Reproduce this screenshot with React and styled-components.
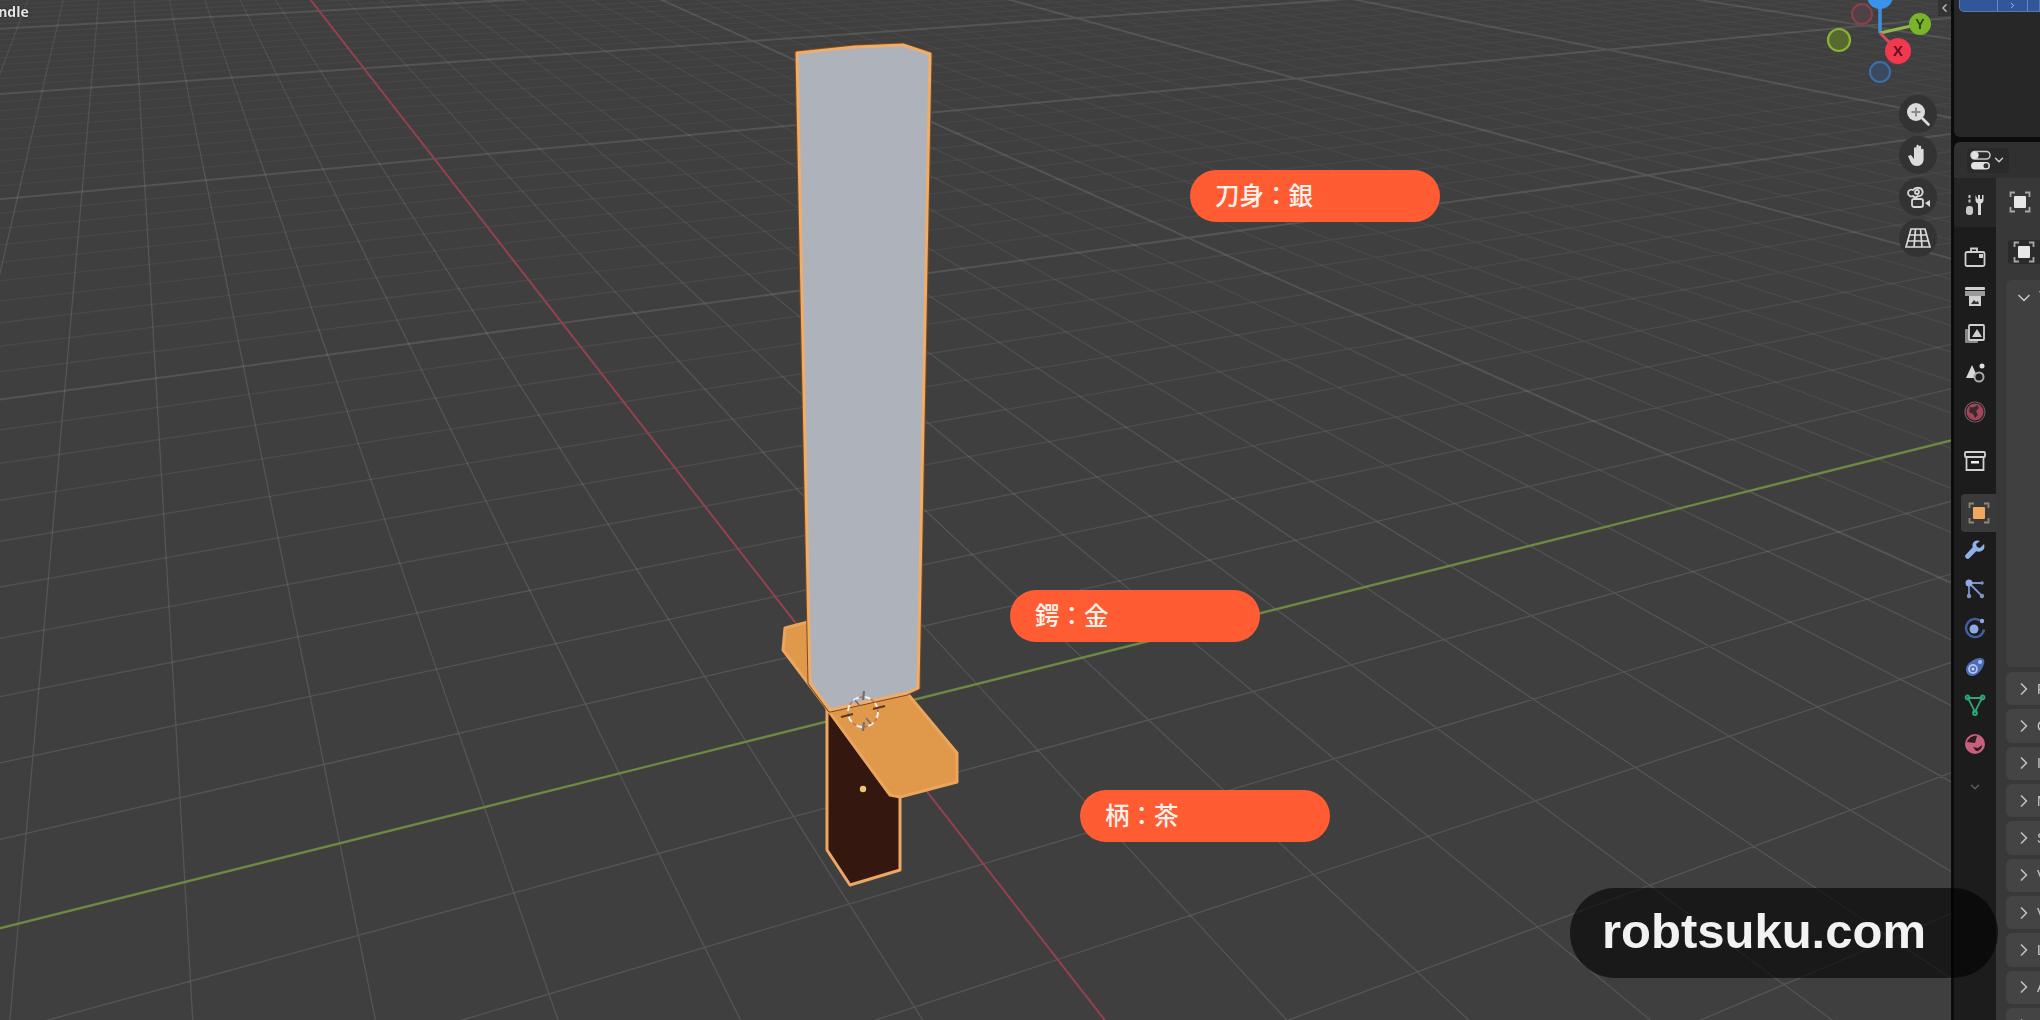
import React from "react";
import styled, { createGlobalStyle } from "styled-components";
import { ChevronDown, ChevronLeft, ChevronRight } from "lucide-react";

const GlobalStyle = createGlobalStyle`
  html, body { margin: 0; padding: 0; background: #3f3f3f; }
  body { font-family: "Liberation Sans", "Noto Sans CJK JP", sans-serif; }
`;

/* ---------- perspective ground grid (a homography fitted to the picture) ---------- */
const V1 = [4645, -233];
const V2 = [120, -245];
const O = [865, 712];
const A = 0.0305;
const B = 0.0685;

const project = (u, v) => {
  const p = A * u;
  const q = B * v;
  const w = p + q + 1;
  return [(p * V1[0] + q * V2[0] + O[0]) / w, (p * V1[1] + q * V2[1] + O[1]) / w];
};

const UMIN = -10, UMAX = 60, VMIN = -7, VMAX = 58;
const f = (n) => n.toFixed(1);

const buildGrid = () => {
  const buckets = [{}, {}, {}, {}, {}, {}, {}, {}];
  const add = (a, b, next) => {
    const dx = b[0] - a[0], dy = b[1] - a[1];
    const len = Math.hypot(dx, dy) || 1;
    const s = Math.abs((next[0] - a[0]) * dy - (next[1] - a[1]) * dx) / len;
    const level = Math.max(0, Math.min(7, Math.floor((s - 5) / 8)));
    buckets[level].d = (buckets[level].d || "") + `M${f(a[0])} ${f(a[1])}L${f(b[0])} ${f(b[1])}`;
  };
  for (let u = UMIN; u <= UMAX; u++) {
    if (u % 10 === 0) continue;
    for (let v = VMIN; v < VMAX; v += 2) add(project(u, v), project(u, v + 2), project(u + 1, v));
  }
  for (let v = VMIN; v <= VMAX; v++) {
    if (v % 10 === 0) continue;
    for (let u = UMIN; u < UMAX; u += 2) add(project(u, v), project(u + 2, v), project(u, v + 1));
  }
  let major = "";
  for (let u = UMIN; u <= UMAX; u += 10) {
    if (u === 0) continue;
    const a = project(u, VMIN), b = project(u, VMAX);
    major += `M${f(a[0])} ${f(a[1])}L${f(b[0])} ${f(b[1])}`;
  }
  for (let v = 10; v <= VMAX; v += 10) {
    const a = project(UMIN, v), b = project(UMAX, v);
    major += `M${f(a[0])} ${f(a[1])}L${f(b[0])} ${f(b[1])}`;
  }
  return { buckets, major };
};
const GRID = buildGrid();
const RED_A = project(0, 60), RED_B = project(0, -7);
const GREEN_A = project(-10, 0), GREEN_B = project(60, 0);

/* ---------- page ---------- */
const Page = styled.div`
  display: flex;
  width: 2040px;
  height: 1020px;
  overflow: hidden;
  background: #000;
`;
const Viewport = styled.main`
  position: relative;
  flex: 0 0 1951px;
  height: 1020px;
  overflow: hidden;
  background: #3f3f3f;
`;
const SceneCanvas = styled.svg`
  display: block;
  width: 2040px;
  height: 1020px;
  filter: blur(0.7px);
`;
const ObjectLabel = styled.span`
  position: absolute;
  top: 2px;
  left: -21px;
  font: 700 14px "Open Sans", sans-serif;
  color: #e4e4e4;
  text-shadow: 0 0 2px #111;
  filter: blur(0.5px);
`;
const Callout = styled.div`
  position: absolute;
  left: ${(p) => p.$x}px;
  top: ${(p) => p.$y}px;
  display: flex;
  align-items: center;
  box-sizing: border-box;
  width: 250px;
  height: 52px;
  padding: 0 0 3px 25px;
  border-radius: 26px;
  background: #ff5c33;
  color: #fff3ec;
  font: 500 24.5px "Noto Sans CJK JP", sans-serif;
`;
const CollapseTab = styled.div`
  position: absolute;
  top: 0;
  right: 0;
  display: flex;
  align-items: center;
  justify-content: center;
  width: 13px;
  height: 16px;
  background: #333;
  color: #bbb;
`;
const GizmoArt = styled.svg`
  position: absolute;
  top: 0;
  left: 1825px;
  width: 110px;
  height: 95px;
  filter: blur(0.5px);
`;
const NavStack = styled.div`
  position: absolute;
  top: 95px;
  left: 1899px;
  display: flex;
  flex-direction: column;
  gap: 3.4px;
  filter: blur(0.5px);
`;
const NavButton = styled.div`
  display: flex;
  align-items: center;
  justify-content: center;
  width: 38px;
  height: 38px;
  border-radius: 50%;
  background: #333333;
`;

/* ---------- right column ---------- */
const Sidebar = styled.aside`
  position: relative;
  display: flex;
  flex: 1;
  flex-direction: column;
  min-width: 0;
  padding-left: 3px;
  background: #0c0c0c;
  filter: blur(0.5px);
`;
const Outliner = styled.section`
  flex: 0 0 137px;
  padding-left: 5px;
  border-radius: 0 0 0 6px;
  background: #272727;
`;
const BlueBar = styled.div`
  display: flex;
  align-items: center;
  height: 11px;
  border: 1px solid #5a78ad;
  border-top: 0;
  border-radius: 0 0 0 5px;
  background: #31579b;
  color: #d8e2f5;
`;
const BlueCell = styled.div`
  display: flex;
  align-items: center;
  justify-content: center;
  box-sizing: border-box;
  width: ${(p) => p.$w}px;
  height: 100%;
  border-right: 1px solid #6a88bd;
`;
const Properties = styled.section`
  display: flex;
  flex: 1;
  flex-direction: column;
  min-height: 0;
  margin-top: 5px;
  border-radius: 6px 0 0 0;
  background: #303030;
  overflow: hidden;
`;
const PropsHeader = styled.header`
  display: flex;
  flex: 0 0 36px;
  align-items: center;
  padding-left: 13px;
`;
const EditorSwitch = styled.div`
  display: flex;
  align-items: center;
  gap: 1px;
  padding: 2px 3px;
  border-radius: 4px;
  background: #2a2a2a;
  color: #ccc;
`;
const PropsBody = styled.div`
  display: flex;
  flex: 1;
  min-height: 0;
`;
const TabStrip = styled.nav`
  display: flex;
  flex: 0 0 42px;
  flex-direction: column;
  background: #1c1c1c;
`;
const Tab = styled.div`
  display: flex;
  flex: 0 0 ${(p) => p.$h || 38.6}px;
  align-items: center;
  justify-content: center;
  margin-top: ${(p) => p.$gap || 0}px;
  padding-top: ${(p) => p.$nudge || 0}px;
  box-sizing: border-box;
  border-radius: 4px 0 0 4px;
  margin-left: ${(p) => (p.$active ? 7 : 0)}px;
  background: ${(p) => (p.$active ? "#3a3a3a" : p.$lit ? "#262626" : "transparent")};
`;
const Content = styled.div`
  display: flex;
  flex: 1;
  flex-direction: column;
  min-width: 0;
  padding: 12px 0 0 10px;
  background: #383838;
  overflow: hidden;
`;
const ContextIcon = styled.div`
  display: flex;
  flex: 0 0 24px;
  align-items: center;
  margin-top: ${(p) => p.$gap || 0}px;
  margin-left: ${(p) => p.$indent || 0}px;
  padding-left: ${(p) => (p.$boxed ? 5 : 0)}px;
  background: ${(p) => (p.$boxed ? "#2b2b2b" : "transparent")};
  border-radius: 4px 0 0 4px;
`;
const TransformPanel = styled.div`
  display: flex;
  flex: 0 0 387px;
  gap: 5px;
  padding: 8px 0 0 8px;
  margin: 16px 0 5px;
  border-radius: 6px 0 0 6px;
  background: #404040;
  color: #c8c8c8;
  font: 14px "Liberation Sans", sans-serif;
  white-space: nowrap;
  box-sizing: border-box;
`;
const PanelRow = styled.div`
  display: flex;
  flex: 0 0 33.33px;
  align-items: center;
  gap: 3px;
  margin-bottom: 4px;
  padding-left: 8px;
  border-radius: 6px 0 0 6px;
  background: #444;
  color: #c8c8c8;
  font: 14px "Liberation Sans", sans-serif;
  white-space: nowrap;
  overflow: hidden;
`;

/* ---------- watermark ---------- */
const Watermark = styled.div`
  position: absolute;
  left: 1570px;
  top: 888px;
  display: flex;
  align-items: center;
  box-sizing: border-box;
  width: 428px;
  height: 90px;
  padding: 0 0 4px 32px;
  border-radius: 45px;
  background: rgba(0, 0, 0, 0.6);
  color: #f2f2f2;
  font: 700 49px "Liberation Sans", sans-serif;
`;

/* ---------- drawings ---------- */
const Cursor3D = () => (
  <g>
    <circle cx="863" cy="712" r="15" fill="none" stroke="#f4f0ea" strokeWidth="2" strokeDasharray="7 5" />
    <circle cx="863" cy="712" r="15" fill="none" stroke="#c8714f" strokeWidth="1.6" strokeDasharray="4 8" strokeDashoffset="6" />
    <path d="M841 717l12-3M873 709l12-3" stroke="#5b3a22" strokeWidth="2.2" />
    <path d="M864 691l-1 9M864 722l-1 9" stroke="#6d7078" strokeWidth="2.2" />
    <path d="M855 700l5 6M866 718l5 6" stroke="#6d7078" strokeWidth="1.6" />
  </g>
);

const BLADE = "M797 53L855 47L903 45L930 54L918 688L907 693L830 710L810 683Z";

const Scene = () => (
  <SceneCanvas viewBox="0 0 2040 1020">
    {GRID.buckets.map((b, i) =>
      b.d ? (
        <path key={i} d={b.d} fill="none" stroke="#fff" strokeOpacity={0.035 + i * 0.012} strokeWidth="1.3" />
      ) : null
    )}
    <path d={GRID.major} fill="none" stroke="#fff" strokeOpacity="0.11" strokeWidth="2" />
    <line x1={RED_A[0]} y1={RED_A[1]} x2={RED_B[0]} y2={RED_B[1]} stroke="#96404f" strokeWidth="2" />
    <line x1={GREEN_A[0]} y1={GREEN_A[1]} x2={GREEN_B[0]} y2={GREEN_B[1]} stroke="#6c8a42" strokeWidth="2.2" />

    {/* handle */}
    <path d="M827 708L827 850L850 885L900 870L900 790Z" fill="#34170e" stroke="#eda765" strokeWidth="3" strokeLinejoin="round" />
    <circle cx="863" cy="789" r="3.2" fill="#f0c27a" />
    {/* guard */}
    <path d="M808 622L785 628L783 650L823 703L830 713L890 795L900 797L957 782L957 753L907 693Z" fill="#e0984b" stroke="#eca55c" strokeWidth="3" strokeLinejoin="round" />
    {/* blade */}
    <path d={BLADE} fill="#adb2bb" stroke="#7a4a22" strokeWidth="5" strokeLinejoin="round" />
    <path d={BLADE} fill="#adb2bb" stroke="#f0ad6a" strokeWidth="3" strokeLinejoin="round" />
    <Cursor3D />
  </SceneCanvas>
);

const Gizmo = () => (
  <GizmoArt viewBox="1825 0 110 95">
    <circle cx="1862" cy="14" r="10" fill="#4f4245" stroke="#8f3f4a" strokeWidth="2" />
    <circle cx="1839" cy="40" r="11" fill="#57692f" stroke="#8bb332" strokeWidth="2.2" />
    <circle cx="1880" cy="72" r="10" fill="#3b4a5e" stroke="#3d6eb0" strokeWidth="2" />
    <line x1="1880" y1="0" x2="1880" y2="33" stroke="#3f8ee0" strokeWidth="3.5" />
    <line x1="1880" y1="33" x2="1920" y2="24" stroke="#8fb84a" strokeWidth="3" />
    <line x1="1880" y1="33" x2="1898" y2="51" stroke="#d0505f" strokeWidth="3" />
    <circle cx="1880" cy="-4" r="13" fill="#3b92ea" />
    <circle cx="1920" cy="24" r="11" fill="#7ab428" />
    <circle cx="1898" cy="51" r="13" fill="#f0384f" />
    <text x="1920" y="29" textAnchor="middle" fontFamily="Liberation Sans" fontWeight="700" fontSize="14" fill="#2c4410">Y</text>
    <text x="1898" y="56" textAnchor="middle" fontFamily="Liberation Sans" fontWeight="700" fontSize="15" fill="#5c0f1c">X</text>
  </GizmoArt>
);

const ZoomIcon = () => (
  <svg width="26" height="26" viewBox="0 0 26 26">
    <circle cx="11" cy="11" r="9" fill="#dcdcdc" />
    <path d="M11 6.5v9M6.5 11h9" stroke="#8a8a8a" strokeWidth="2" />
    <path d="M17.5 17.5l6 6" stroke="#dcdcdc" strokeWidth="2.6" strokeLinecap="round" />
  </svg>
);
const HandIcon = () => (
  <svg width="26" height="26" viewBox="0 0 26 26">
    <path d="M3 14l3-1 3 4V6.5a1.2 1.2 0 0 1 2.4 0V13V4a1.2 1.2 0 0 1 2.4 0v9V5a1.2 1.2 0 0 1 2.4 0v8.500V8a1.2 1.2 0 0 1 2.4 0v9c0 4-2.500 7-6.500 7-3.500 0-5-1.500-6.500-4z" fill="#dcdcdc" />
  </svg>
);
const OrbitCamIcon = () => (
  <svg width="28" height="26" viewBox="0 0 28 26" fill="none" stroke="#d8d8d8" strokeWidth="1.8">
    <path d="M4 9c0-3 3-4 5-3 2-3 8-3 9 0 2 3-1 7-4 6-2 2-4 1-5 0-2 1-5 0-5-3z" />
    <circle cx="13" cy="8" r="2" />
    <rect x="8" y="15" width="11" height="8" rx="2" />
    <path d="M21 19l5-3v7z" fill="#d8d8d8" stroke="none" />
  </svg>
);
const PerspectiveIcon = () => (
  <svg width="26" height="22" viewBox="0 0 26 22" fill="none" stroke="#dcdcdc" strokeWidth="1.7">
    <path d="M6 2h14l5 18H1zM4.300 8h17.400M2.600 14h20.800M10.500 2L9 20M15.500 2L17 20" />
  </svg>
);

const I = { fill: "none", stroke: "#d0d0d0", strokeWidth: 1.8 };
const ToolIcon = () => (
  <svg width="22" height="24" viewBox="0 0 22 24">
    <path d="M5.5 2v9" stroke="#c8c8c8" strokeWidth="2" strokeDasharray="3 1.5" />
    <rect x="2" y="13" width="7" height="9" rx="3" fill="#c8c8c8" />
    <path d="M11.5 2v5c0 2 1 3 2.500 3.500V22h3V10.500c1.500-.5 2.500-1.500 2.500-3.500V2L18 2v4h-2V2h-2v4h-.5z" fill="#d8d8d8" />
  </svg>
);
const RenderIcon = () => (
  <svg width="22" height="22" viewBox="0 0 22 22" {...I}>
    <rect x="1.5" y="6" width="19" height="14" rx="1.5" />
    <path d="M7 6V2.500h6V6" />
    <rect x="15" y="8" width="4" height="4" fill="#d0d0d0" stroke="none" />
  </svg>
);
const OutputIcon = () => (
  <svg width="22" height="22" viewBox="0 0 22 22">
    <rect x="1" y="2" width="20" height="3" rx="1" fill="#d0d0d0" />
    <rect x="1" y="6" width="20" height="5" fill="#9a9a9a" />
    <rect x="5" y="11" width="12" height="10" fill="#d0d0d0" />
    <path d="M7 19l3-4 2 2 2-1 1 3z" fill="#333" />
  </svg>
);
const ViewLayerIcon = () => (
  <svg width="22" height="22" viewBox="0 0 22 22">
    <rect x="1" y="6" width="13" height="14" rx="1" fill="#888" />
    <rect x="5" y="2" width="15" height="15" rx="1" fill="#1c1c1c" stroke="#d0d0d0" strokeWidth="1.8" />
    <path d="M8 14l5-8 5 8z" fill="#d0d0d0" />
  </svg>
);
const SceneIcon = () => (
  <svg width="22" height="22" viewBox="0 0 22 22">
    <path d="M8 3l6 13H2z" fill="#d8d8d8" />
    <circle cx="15" cy="15" r="4.5" fill="#1c1c1c" stroke="#a8a8a8" strokeWidth="2" />
    <circle cx="18" cy="4" r="2.5" fill="#e0e0e0" />
  </svg>
);
const WorldIcon = () => (
  <svg width="22" height="22" viewBox="0 0 22 22">
    <circle cx="11" cy="11" r="8.5" fill="#a54358" />
    <path d="M6 6c3 1 5 0 7-2l2 3-3 3 2 4-3 3-2-4-4-2z" fill="#3a2a30" />
    <circle cx="11" cy="11" r="10" fill="none" stroke="#6b5a60" strokeWidth="1.2" />
  </svg>
);
const CollectionIcon = () => (
  <svg width="22" height="22" viewBox="0 0 22 22">
    <rect x="1" y="2" width="20" height="5" rx="1" fill="none" stroke="#d0d0d0" strokeWidth="1.8" />
    <path d="M2.500 7v13h17V7" fill="none" stroke="#d0d0d0" strokeWidth="1.8" />
    <rect x="7" y="11" width="8" height="2.5" fill="#f0f0f0" />
  </svg>
);
const ObjectMark = ({ color, size = 22 }) => (
  <svg width={size} height={size} viewBox="0 0 22 22">
    <path d="M1.500 6V1.500H6M16 1.500h4.500V6M20.500 16v4.500H16M6 20.500H1.500V16" fill="none" stroke={color === "#f0a860" ? "#8f8577" : "#a8a8a8"} strokeWidth="1.8" />
    <rect x="5" y="5" width="12" height="12" rx="1" fill={color} />
  </svg>
);
const ModifierIcon = () => (
  <svg width="22" height="22" viewBox="0 0 22 22">
    <path d="M20 4l-4 4-3-1-1-3 4-3c-3-1.500-7 0-7.500 3.500-.2 1 0 2 .2 2.800L1.500 15c-1.500 2 1.500 5 3.500 3.500l7.200-7.200c3 1 7 0 8-3 .3-1.500.3-3 -.2-4.300z" fill="#8fb0e8" />
  </svg>
);
const ParticlesIcon = () => (
  <svg width="22" height="22" viewBox="0 0 22 22">
    <path d="M5 5L18 18M5 5v13M5 5h12" stroke="#7f93c8" strokeWidth="1.8" />
    <circle cx="5" cy="5" r="3.5" fill="#93a9e6" />
    <circle cx="18" cy="18" r="2.2" fill="#7f93c8" />
    <circle cx="5" cy="18" r="2.2" fill="#7f93c8" />
    <circle cx="18" cy="5" r="1.8" fill="#7f93c8" />
  </svg>
);
const PhysicsIcon = () => (
  <svg width="22" height="22" viewBox="0 0 22 22">
    <path d="M16 3.500a9 9 0 1 0 4 9" fill="none" stroke="#3f5fa0" strokeWidth="2.4" />
    <circle cx="10" cy="12" r="4.5" fill="#8fa8e6" />
    <circle cx="18" cy="4" r="2.2" fill="#8fa8e6" />
  </svg>
);
const ConstraintIcon = () => (
  <svg width="22" height="22" viewBox="0 0 22 22">
    <path d="M2 13c0-5 8-11 14-11 4 0 5 3 4 6-2 6-7 12-12 12-4 0-6-3-6-7z" fill="#4d6cb5" />
    <circle cx="9" cy="13" r="4" fill="none" stroke="#a9c0f0" strokeWidth="1.8" />
    <circle cx="9" cy="13" r="1.5" fill="#d0dcf8" />
    <circle cx="16" cy="6" r="2" fill="#a9c0f0" />
  </svg>
);
const DataIcon = () => (
  <svg width="22" height="22" viewBox="0 0 22 22" fill="none" stroke="#2fa578" strokeWidth="1.8">
    <path d="M4 4h14L11 18z" />
    <circle cx="3.5" cy="3.5" r="2" />
    <circle cx="18.5" cy="3.5" r="2" />
    <circle cx="11" cy="19" r="2" />
  </svg>
);
const MaterialIcon = () => (
  <svg width="22" height="22" viewBox="0 0 22 22">
    <circle cx="11" cy="11" r="10" fill="#c7607c" />
    <path d="M3 9c2-5 7-7 10-6l-2 7zM9 14l5 1 4-3c0 4-3 6-6 6z" fill="#2d1c22" />
  </svg>
);
const EditorTypeIcon = () => (
  <svg width="21" height="21" viewBox="0 0 21 21">
    <rect x="1" y="1.5" width="19" height="7.5" rx="3.7" fill="none" stroke="#c8c8c8" strokeWidth="1.5" />
    <circle cx="5" cy="5.2" r="3.7" fill="#e2e2e2" />
    <rect x="1" y="12" width="19" height="7.5" rx="3.7" fill="#e2e2e2" />
    <circle cx="16" cy="15.7" r="2.5" fill="#333" />
  </svg>
);

const FOLDED = ["Relations", "Collections", "Instancing", "Motion Paths", "Shading", "Visibility", "Viewport Display", "Line Art", "Animation", "Custom Properties"];

const Muted = styled.span`
  display: flex;
  color: ${(p) => p.$c || "#c0c0c0"};
`;

export default function App() {
  return (
    <>
      <GlobalStyle />
      <Page>
        <Viewport>
          <Scene />
          <ObjectLabel>Handle</ObjectLabel>
          <Gizmo />
          <NavStack>
            <NavButton><ZoomIcon /></NavButton>
            <NavButton><HandIcon /></NavButton>
            <NavButton><OrbitCamIcon /></NavButton>
            <NavButton><PerspectiveIcon /></NavButton>
          </NavStack>
          <CollapseTab><ChevronLeft size={14} strokeWidth={2.5} /></CollapseTab>
          <Callout $x={1190} $y={170}>刀身：銀</Callout>
          <Callout $x={1010} $y={590}>鍔：金</Callout>
          <Callout $x={1080} $y={790}>柄：茶</Callout>
        </Viewport>
        <Sidebar>
          <Outliner>
            <BlueBar>
              <BlueCell $w={38} />
              <BlueCell $w={30}><ChevronRight size={9} /></BlueCell>
            </BlueBar>
          </Outliner>
          <Properties>
            <PropsHeader>
              <EditorSwitch>
                <EditorTypeIcon />
                <ChevronDown size={14} strokeWidth={2.5} />
              </EditorSwitch>
            </PropsHeader>
            <PropsBody>
              <TabStrip>
                <Tab $h={49} $lit $nudge={5}><ToolIcon /></Tab>
                <Tab $gap={11}><RenderIcon /></Tab>
                <Tab><OutputIcon /></Tab>
                <Tab><ViewLayerIcon /></Tab>
                <Tab><SceneIcon /></Tab>
                <Tab><WorldIcon /></Tab>
                <Tab $gap={11}><CollectionIcon /></Tab>
                <Tab $gap={13} $active $h={38}><ObjectMark color="#f0a860" /></Tab>
                <Tab><ModifierIcon /></Tab>
                <Tab><ParticlesIcon /></Tab>
                <Tab><PhysicsIcon /></Tab>
                <Tab><ConstraintIcon /></Tab>
                <Tab><DataIcon /></Tab>
                <Tab><MaterialIcon /></Tab>
                <Tab $h={48}><Muted $c="#5c5c5c"><ChevronDown size={14} strokeWidth={2.5} /></Muted></Tab>
              </TabStrip>
              <Content>
                <ContextIcon $indent={3}><ObjectMark color="#e8e8e8" /></ContextIcon>
                <ContextIcon $gap={26} $indent={2} $boxed><ObjectMark color="#e8e8e8" /></ContextIcon>
                <TransformPanel>
                  <Muted><ChevronDown size={20} /></Muted>
                  <span>Transform</span>
                </TransformPanel>
                {FOLDED.map((name) => (
                  <PanelRow key={name}>
                    <Muted><ChevronRight size={20} /></Muted>
                    <span>{name}</span>
                  </PanelRow>
                ))}
              </Content>
            </PropsBody>
          </Properties>
        </Sidebar>
        <Watermark>robtsuku.com</Watermark>
      </Page>
    </>
  );
}
